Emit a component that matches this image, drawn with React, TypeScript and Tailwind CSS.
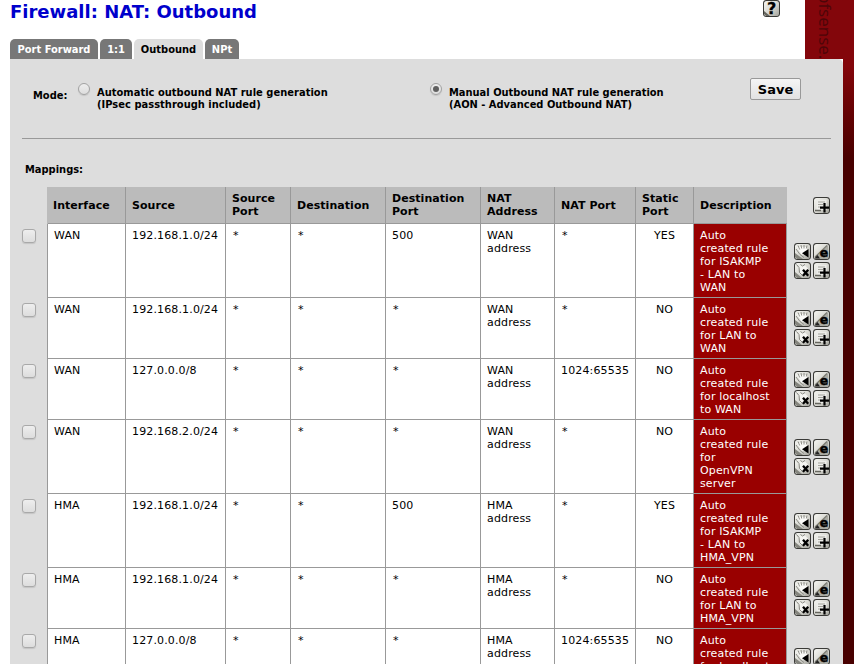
import React from "react";

type Rule = { iface: string; src: string; dport: string; nat: string; port: string; stat: string; desc: string[]; tall?: boolean };

const rules: Rule[] = [
  { iface: "WAN", src: "192.168.1.0/24", dport: "500", nat: "WAN", port: "*", stat: "YES", desc: ["Auto", "created rule", "for ISAKMP", "- LAN to", "WAN"] },
  { iface: "WAN", src: "192.168.1.0/24", dport: "*", nat: "WAN", port: "*", stat: "NO", desc: ["Auto", "created rule", "for LAN to", "WAN"] },
  { iface: "WAN", src: "127.0.0.0/8", dport: "*", nat: "WAN", port: "1024:65535", stat: "NO", desc: ["Auto", "created rule", "for localhost", "to WAN"] },
  { iface: "WAN", src: "192.168.2.0/24", dport: "*", nat: "WAN", port: "*", stat: "NO", desc: ["Auto", "created rule", "for", "OpenVPN", "server"] },
  { iface: "HMA", src: "192.168.1.0/24", dport: "500", nat: "HMA", port: "*", stat: "YES", desc: ["Auto", "created rule", "for ISAKMP", "- LAN to", "HMA_VPN"] },
  { iface: "HMA", src: "192.168.1.0/24", dport: "*", nat: "HMA", port: "*", stat: "NO", desc: ["Auto", "created rule", "for LAN to", "HMA_VPN"] },
  { iface: "HMA", src: "127.0.0.0/8", dport: "*", nat: "HMA", port: "1024:65535", stat: "NO", desc: ["Auto", "created rule", "for localhost"], tall: true },
];

const heads = [["Interface"], ["Source"], ["Source", "Port"], ["Destination"], ["Destination", "Port"], ["NAT", "Address"], ["NAT Port"], ["Static", "Port"], ["Description"]];
const cols = "grid grid-cols-[78px_100px_65px_95px_95px_74px_81px_58px_93px]";
const condensed = "font-['DejaVu_Sans_Condensed','DejaVu_Sans',sans-serif] font-bold [font-stretch:condensed]";

function Icon({ kind }: { kind: "move" | "edit" | "delete" | "add" | "help" }) {
  return (
    <svg width="17" height="17" viewBox="0 0 17 17" className="block">
      <defs>
        <linearGradient id="metal" x1="0" y1="0" x2="1" y2="1">
          <stop offset="0" stopColor="#f6f6f2" />
          <stop offset=".55" stopColor="#d6d6d0" />
          <stop offset="1" stopColor="#a2a29b" />
        </linearGradient>
      </defs>
      <rect x="0" y="0" width="17" height="17" rx="3.4" fill="#3a3a37" />
      <rect x="1" y="1" width="15" height="15" rx="2.6" fill="url(#metal)" />
      {kind === "move" && (
        <>
          <path d="M3 4l4 7 3 1 3-4V4z" fill="#fbfbf9" />
          <path d="M4 2.5l1.7 4M7 2l.7 3.5M10 2v3.5M13 2.5l-.7 3M2 6l4 5.5 4 3" fill="none" stroke="#85857e" strokeWidth=".9" />
          <path d="M1 10v4l2 2h6z" fill="#85857e" />
          <path d="M8 10.3L14.5 6v8.6z" fill="#000" />
        </>
      )}
      {kind === "edit" && (
        <>
          <path d="M1 15L15 2v13l-1 1H2z" fill="#aaaaa2" />
          <path d="M2 14L14 2.5" stroke="#77776f" strokeWidth="1.1" />
          <path d="M1.5 15.5l3-3.5 2.5 3.5z" fill="#222" />
          <text x="6.7" y="14" fontSize="12.5" fontWeight="700" fontFamily="DejaVu Sans" stroke="#000" strokeWidth=".4">e</text>
        </>
      )}
      {kind === "delete" && (
        <>
          <path d="M4 5l6-2.5 4 4-3 7-5-1z" fill="#f4f4f1" />
          <path d="M2.5 2.5l2.5 3 .5 5 4 4M6.5 2.5l2 1.5L11 2.5" fill="none" stroke="#85857e" />
          <path d="M1 10v4l2 2h5z" fill="#85857e" />
          <path d="M9 7.8l5.2 6M14.2 7.8l-5.2 6" stroke="#000" strokeWidth="2.3" />
        </>
      )}
      {kind === "add" && (
        <>
          <path d="M3.5 3h10v10h-10z" fill="#ededea" />
          <path d="M5 5h7M5 7.5h5M5 10h2.5" stroke="#a2a29b" />
          <path d="M2 13.5h6" stroke="#66665f" strokeWidth="1.5" />
          <path d="M11.5 6v9.5M7 10.7h9" stroke="#000" strokeWidth="2.2" />
        </>
      )}
      {kind === "help" && (
        <>
          <path d="M1 11l6 5H3l-2-2z" fill="#66665f" />
          <text x="3.9" y="14" fontSize="16" fontWeight="700" fontFamily="DejaVu Sans" stroke="#000" strokeWidth=".3">?</text>
        </>
      )}
    </svg>
  );
}

function Radio({ checked }: { checked?: boolean }) {
  return (
    <span className="-mt-px flex h-3 w-3 shrink-0 items-center justify-center rounded-full border border-[#a2a2a2] bg-linear-to-b from-[#eeeeee] to-[#dddddd] shadow-[0_1px_1px_#c4c4c4]">
      {checked && <span className="h-1.5 w-1.5 rounded-full bg-[#606060]" />}
    </span>
  );
}

function Lines({ items }: { items: string[] }) {
  return <>{items.map((t) => <div key={t} className="whitespace-nowrap">{t}</div>)}</>;
}

function Row({ rule }: { rule: Rule }) {
  const tall = rule.tall || rule.desc.length === 5;
  const cell = "border-r border-b border-[#999999] pt-[5px] pl-1.5";
  const star = "border-r border-b border-[#999999] pt-[5px] pl-[7px]";
  return (
    <div className={`flex shrink-0 ${tall ? "h-[74px]" : "h-[61px]"}`}>
      <div className="w-[37px] shrink-0 pt-[5px] pl-3">
        <span className="block h-3.5 w-3.5 rounded-[3px] border border-[#a9a9a9] bg-linear-to-b from-[#eeeeee] to-[#dddddd] shadow-[0_1px_1px_#c4c4c4]" />
      </div>
      <div className={`${cols} border-l border-[#999999] bg-white text-[11px] leading-[13px] tracking-[0.14px]`}>
        <div className={cell}>{rule.iface}</div>
        <div className={cell}>{rule.src}</div>
        <div className={star}>*</div>
        <div className={star}>*</div>
        <div className={rule.dport === "*" ? star : cell}>{rule.dport}</div>
        <div className={cell}><Lines items={[rule.nat, "address"]} /></div>
        <div className={rule.port === "*" ? star : cell}>{rule.port}</div>
        <div className="border-r border-b border-[#999999] pt-[5px] text-center">{rule.stat}</div>
        <div className={`${cell} bg-[#990000] text-white`}><Lines items={rule.desc} /></div>
      </div>
      <div className={`ml-[7px] grid grid-cols-[19px_19px] grid-rows-[19px_19px] content-start ${tall ? "pt-[19px]" : "pt-3"}`}>
        <Icon kind="move" />
        <Icon kind="edit" />
        <Icon kind="delete" />
        <Icon kind="add" />
      </div>
    </div>
  );
}

const tabs = [
  { t: "Port Forward", w: "w-[88px]" },
  { t: "1:1", w: "w-8" },
  { t: "Outbound", w: "w-[69px]" },
  { t: "NPt", w: "w-[34px]" },
];

export default function App() {
  return (
    <div className="flex h-[664px] w-[854px] flex-col overflow-hidden bg-linear-to-b from-[#83060b] from-10% via-[#480000] via-24% to-[#480000] font-['DejaVu_Sans',Verdana,sans-serif] text-black">
      <div className="flex h-[59px] shrink-0">
        <header className="flex w-[805px] flex-col justify-between bg-white pl-2.5">
          <div className="flex h-[22px] justify-between">
            <h1 className="pt-px text-[18px] leading-[22px] font-bold text-[#0000cc]">Firewall: NAT: Outbound</h1>
            <div className="mr-[25px]"><Icon kind="help" /></div>
          </div>
          <nav className={`${condensed} flex gap-0.5 text-[11px]`}>
            {tabs.map(({ t, w }) => (
              <div key={t} className={`${w} h-5 rounded-t-[5px] text-center leading-[21px] whitespace-nowrap ${t === "Outbound" ? "bg-[#dddddd] text-black" : "bg-[#777777] text-white"}`}>{t}</div>
            ))}
          </nav>
        </header>
        <div className="flex h-[59px] w-[49px] items-start overflow-hidden pl-[11px]">
          <span className="-mt-[7px] [writing-mode:vertical-rl] font-['Open_Sans',sans-serif] text-[17px] leading-[18px] text-[#4d0508]">pfsense.org</span>
        </div>
      </div>
      <div className="w-[843px] bg-white pl-2.5">
        <main className="flex h-[605px] w-[833px] flex-col overflow-hidden rounded-tr-[5px] bg-[#dddddd]">
          <section className={`${condensed} ml-3 flex h-20 w-[809px] shrink-0 items-start border-b border-[#999999] text-[11px] leading-3`}>
            <div className="w-[56px] pt-[31px] pl-[11px]">Mode:</div>
            <div className="flex w-[352px] gap-[7px] pt-[25px]">
              <Radio />
              <div className="pt-[3px] tracking-[0.03px] whitespace-nowrap">Automatic outbound NAT rule generation<br />(IPsec passthrough included)</div>
            </div>
            <div className="flex w-[320px] gap-[7px] pt-[25px]">
              <Radio checked />
              <div className="pt-[3px] whitespace-nowrap">Manual Outbound NAT rule generation<br />(AON - Advanced Outbound NAT)</div>
            </div>
            <button className="mt-[19px] h-[22px] w-[51px] rounded-[2px] border border-[#999999] bg-linear-to-b from-[#f5f5f5] to-[#e2e2e2] pt-px font-['DejaVu_Sans',sans-serif] text-[13px] leading-5 font-bold [font-stretch:normal]">Save</button>
          </section>
          <h2 className={`${condensed} h-12 shrink-0 pt-6 pl-[15px] text-[11px] leading-[13px]`}>Mappings:</h2>
          <div className="flex h-[37px] shrink-0 pl-[37px]">
            <div className={`${cols} border-l border-[#bbbbbb] bg-[#bbbbbb] text-[11px] leading-[13px] font-bold tracking-[0.05px]`}>
              {heads.map((h) => (
                <div key={h.join(" ")} className={`flex flex-col justify-center border-b border-[#999999] ${h[0] === "Interface" ? "pl-[5px]" : "pl-1.5"} ${h[0] === "Description" ? "" : "border-r"}`}>
                  <Lines items={h} />
                </div>
              ))}
            </div>
            <div className="ml-[26px] pt-2.5"><Icon kind="add" /></div>
          </div>
          {rules.map((r, i) => <Row key={i} rule={r} />)}
        </main>
      </div>
    </div>
  );
}
